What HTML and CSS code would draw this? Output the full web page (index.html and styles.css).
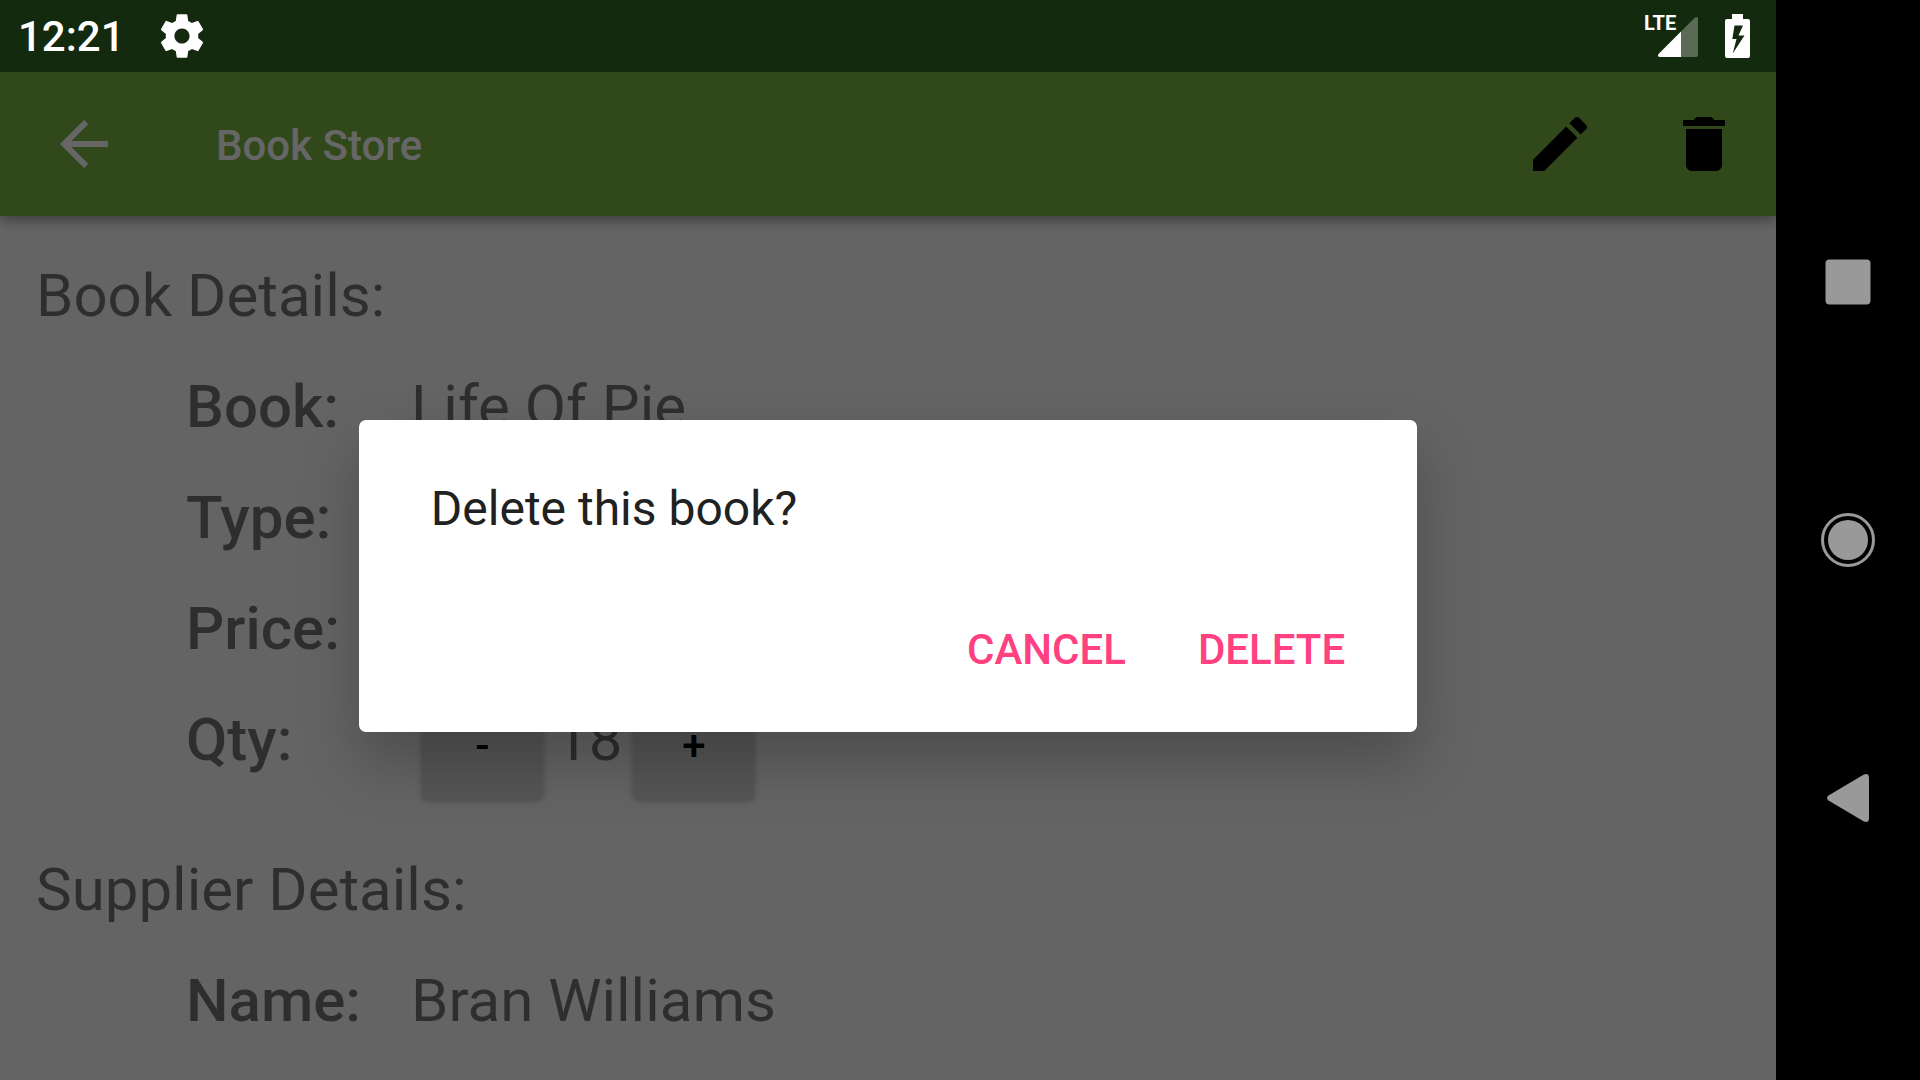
FILE: index.html
```html
<!DOCTYPE html>
<html lang="en">
<head>
<meta charset="utf-8">
<meta name="viewport" content="width=device-width, initial-scale=1">
<title>Book Store</title>
<link rel="stylesheet" href="styles.css">
</head>
<body>
<div class="device">
  <div class="screen">
    <div class="status-bar">
      <time class="clock">12:21</time>
      <svg class="status-gear" viewBox="0 0 24 24" aria-hidden="true"><path d="M19.43 12.98c.04-.32.07-.64.07-.98s-.03-.66-.07-.98l2.11-1.65c.19-.15.24-.42.12-.64l-2-3.46c-.12-.22-.39-.3-.61-.22l-2.49 1c-.52-.4-1.08-.73-1.69-.98l-.38-2.65C14.46 2.18 14.25 2 14 2h-4c-.25 0-.46.18-.49.42l-.38 2.65c-.61.25-1.17.59-1.69.98l-2.49-1c-.23-.09-.49 0-.61.22l-2 3.46c-.13.22-.07.49.12.64l2.11 1.65c-.04.32-.07.65-.07.98s.03.66.07.98l-2.11 1.65c-.19.15-.24.42-.12.64l2 3.46c.12.22.39.3.61.22l2.49-1c.52.4 1.08.73 1.69.98l.38 2.65c.03.24.24.42.49.42h4c.25 0 .46-.18.49-.42l.38-2.65c.61-.25 1.17-.59 1.69-.98l2.49 1c.23.09.49 0 .61-.22l2-3.46c.12-.22.07-.49-.12-.64l-2.11-1.65zM12 15.5c-1.93 0-3.5-1.57-3.5-3.5s1.57-3.5 3.5-3.5 3.5 1.57 3.5 3.5-1.57 3.5-3.5 3.5z"/></svg>
      <div class="status-end">
        <div class="signal">
          <span class="network">LTE</span>
          <svg class="signal-icon" viewBox="0 0 40 40" aria-hidden="true"><path class="faint" d="M23 14.500 36.300 1.200Q40-1.500 40 2.500V38Q40 40 38 40H23z"/><path d="M23 14.500V40H2Q-1.500 39.500 1 36.500z"/></svg>
        </div>
        <svg class="battery" viewBox="0 0 25 44" aria-hidden="true"><path fill-rule="evenodd" d="M7 0h11v5h5q2 0 2 2v35q0 2-2 2H2q-2 0-2-2V7q0-2 2-2h5zM9.500 11.500 7.300 25H11.500L7.700 39.500 19.500 21.500H13.500L18 11.500z"/></svg>
      </div>
    </div>

    <div class="activity">
      <header class="app-bar">
        <button class="icon-button" type="button" aria-label="Navigate up"><svg class="icon light" viewBox="0 0 24 24"><path d="M20 11H7.830l5.590-5.590L12 4l-8 8 8 8 1.410-1.410L7.830 13H20v-2z"/></svg></button>
        <h1 class="app-title">Book Store</h1>
        <div class="app-actions">
          <button class="icon-button" type="button" aria-label="Edit"><svg class="icon" viewBox="0 0 24 24"><path d="M3 17.250V21h3.750L17.810 9.940l-3.750-3.750L3 17.250zM20.710 7.040c.39-.39.39-1.020 0-1.410l-2.340-2.340c-.39-.39-1.020-.39-1.410 0l-1.830 1.830 3.750 3.750 1.830-1.830z"/></svg></button>
          <button class="icon-button" type="button" aria-label="Delete"><svg class="icon" viewBox="0 0 24 24"><path d="M6 19c0 1.100.9 2 2 2h8c1.100 0 2-.9 2-2V7H6v12zM19 4h-3.500l-1-1h-5l-1 1H5v2h14V4z"/></svg></button>
        </div>
      </header>

      <main class="content">
        <h2 class="section-title">Book Details:</h2>
        <dl class="details">
          <div class="row"><dt>Book:</dt><dd>Life Of Pie</dd></div>
          <div class="row"><dt>Type:</dt><dd></dd></div>
          <div class="row"><dt>Price:</dt><dd></dd></div>
          <div class="row quantity">
            <dt>Qty:</dt>
            <dd>
              <button class="step" type="button">-</button>
              <span>18</span>
              <button class="step" type="button">+</button>
            </dd>
          </div>
        </dl>
        <h2 class="section-title">Supplier Details:</h2>
        <dl class="details">
          <div class="row"><dt>Name:</dt><dd>Bran Williams</dd></div>
        </dl>
      </main>
    </div>

    <div class="scrim">
      <div class="dialog" role="alertdialog" aria-modal="true" aria-labelledby="dialog-message">
        <p class="dialog-message" id="dialog-message">Delete this book?</p>
        <div class="dialog-actions">
          <button class="text-button" type="button">CANCEL</button>
          <button class="text-button" type="button">DELETE</button>
        </div>
      </div>
    </div>
  </div>

  <nav class="system-nav" aria-label="System">
    <button class="nav-button" type="button" aria-label="Recent apps"><svg class="nav-icon" viewBox="0 0 60 60"><rect x="7.500" y="7.500" width="45" height="45" rx="4"/></svg></button>
    <button class="nav-button" type="button" aria-label="Home"><svg class="nav-icon" viewBox="0 0 60 60"><circle cx="30" cy="30" r="20"/><circle class="ring" cx="30" cy="30" r="25.500"/></svg></button>
    <button class="nav-button" type="button" aria-label="Back"><svg class="nav-icon" viewBox="0 0 60 60"><path d="M10.500 27.500 45.500 6.800Q51 4.500 51 10V50Q51 55.500 45.500 53.200L10.500 32.500Q7.500 30 10.500 27.500z"/></svg></button>
  </nav>
</div>
</body>
</html>
```
FILE: styles.css
```css
* {
  box-sizing: border-box;
}

body {
  margin: 0;
  background: #000;
  font-family: Roboto, "Noto Sans", sans-serif;
}

h1, h2, p, dl, dd {
  margin: 0;
}

button {
  padding: 0;
  border: 0;
  background: none;
  font-family: inherit;
}

svg {
  display: block;
}

.device {
  display: flex;
  height: 100vh;
}

.screen {
  position: relative;
  display: flex;
  flex: 1;
  flex-direction: column;
  min-width: 0;
}

/* Status bar */
.status-bar {
  position: relative;
  z-index: 2;
  display: flex;
  flex: none;
  align-items: center;
  height: 72px;
  padding: 0 26px 0 18px;
  background: #142a0e;
  color: #fff;
  fill: #fff;
}

.clock {
  padding-top: 2px;
  font-size: 42px;
  font-weight: 500;
  line-height: 72px;
}

.status-gear {
  width: 52px;
  height: 52px;
  margin-left: 31px;
}

.status-end {
  display: flex;
  align-items: center;
  gap: 27px;
  margin-left: auto;
}

.signal {
  position: relative;
  padding: 2px 0 0 13px;
}

.network {
  position: absolute;
  top: -2px;
  left: -1px;
  font-size: 20px;
  font-weight: 700;
  line-height: 20px;
}

.signal-icon {
  width: 40px;
  height: 40px;
}

.faint {
  opacity: 0.3;
}

.battery {
  width: 25px;
  height: 44px;
}

/* App window */
.activity {
  display: flex;
  flex: 1;
  flex-direction: column;
  min-height: 0;
  overflow: hidden;
  background: #fafafa;
}

.app-bar {
  display: flex;
  flex: none;
  align-items: center;
  height: 144px;
  padding: 0 36px 0 48px;
  background: #7cb342;
  box-shadow: 0 4px 12px rgba(0, 0, 0, 0.4);
}

.app-title {
  padding-top: 2px;
  margin-left: 96px;
  color: #fff;
  font-size: 42px;
  font-weight: 500;
}

.app-actions {
  display: flex;
  gap: 72px;
  margin-left: auto;
}

.icon {
  width: 72px;
  height: 72px;
}

.light {
  fill: #fff;
}

.content {
  padding: 24px 36px;
  color: rgba(0, 0, 0, 0.54);
  font-size: 60px;
  line-height: 111px;
}

.section-title {
  font-size: 60px;
  font-weight: 400;
}

.details {
  padding-left: 150px;
}

.row {
  display: grid;
  grid-template-columns: 225px 1fr;
}

.row dt {
  font-weight: 500;
}

.quantity {
  height: 150px;
}

.quantity dd {
  display: flex;
  align-items: flex-start;
}

.step {
  width: 121px;
  height: 108px;
  padding-top: 2px;
  margin: 6px 12px 6px 11px;
  border-radius: 6px;
  background: #d6d7d7;
  box-shadow: 0 3px 6px rgba(0, 0, 0, 0.24);
  color: #000;
  font-size: 42px;
  font-weight: 500;
}

/* Confirmation dialog */
.scrim {
  position: absolute;
  inset: 72px 0 0;
  z-index: 1;
  display: flex;
  align-items: center;
  justify-content: center;
  overflow: hidden;
  background: rgba(0, 0, 0, 0.6);
}

.dialog {
  width: calc(65% - 96px);
  padding: 61px 36px 11px 72px;
  border-radius: 7px;
  background: #fff;
  box-shadow: 0 30px 60px rgba(0, 0, 0, 0.24);
}

.dialog-message {
  color: #212121;
  font-size: 48px;
  line-height: 56px;
}

.dialog-actions {
  display: flex;
  justify-content: flex-end;
  padding-top: 40px;
}

.text-button {
  height: 144px;
  padding: 0 36px;
  color: #ff4081;
  font-size: 42px;
  font-weight: 500;
}

/* System navigation */
.system-nav {
  display: flex;
  flex: none;
  flex-direction: column;
  align-items: center;
  justify-content: center;
  gap: 114px;
  width: 144px;
  background: #000;
}

.nav-button {
  display: grid;
  place-items: center;
  width: 144px;
  height: 144px;
}

.nav-icon {
  width: 60px;
  height: 60px;
  fill: #999;
}

.ring {
  fill: none;
  stroke: #999;
  stroke-width: 3;
}
```
